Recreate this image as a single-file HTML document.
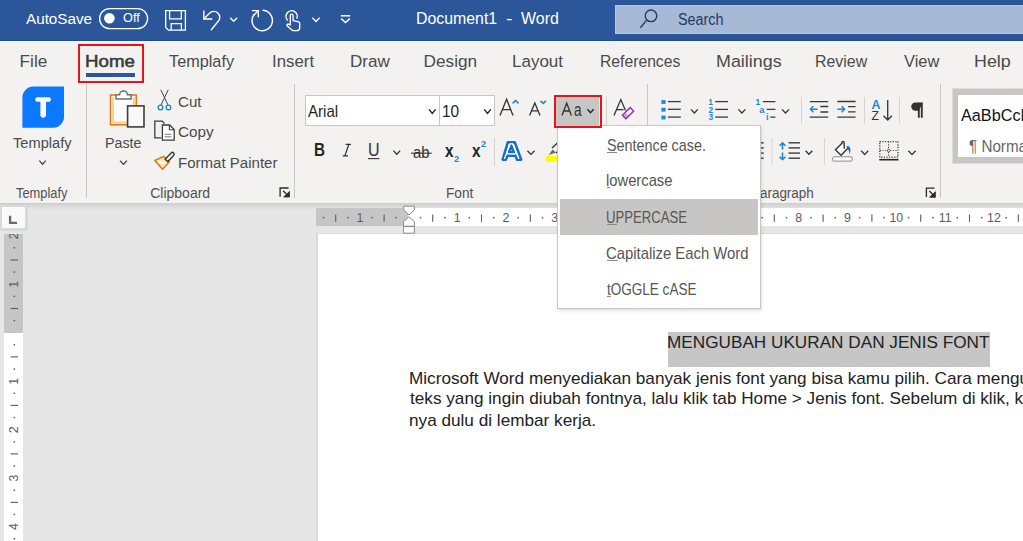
<!DOCTYPE html>
<html><head><meta charset="utf-8">
<style>
*{margin:0;padding:0;box-sizing:border-box}
html,body{width:1023px;height:541px;overflow:hidden;background:#e6e6e6;font-family:"Liberation Sans",sans-serif}
.a{position:absolute}
.t{position:absolute;white-space:nowrap;line-height:1;transform-origin:0 0}
svg{position:absolute;left:0;top:0;overflow:visible}
</style></head><body>
<div class="a" style="left:0;top:0;width:1023px;height:41px;background:#2b579a"></div>
<div class="a" style="left:0;top:39.5px;width:1023px;height:1.5px;background:#1f4d8e"></div>
<div class="a" style="left:0;top:41px;width:1023px;height:162px;background:#f3f2f1"></div>
<div class="a" style="left:0;top:203px;width:1023px;height:7px;background:linear-gradient(#cbcdcc,#d9dad9 45%,#e6e6e6)"></div>
<div class="a" style="left:615px;top:5px;width:420px;height:28.5px;background:#a7b9d4;border:1px solid #b6c6dd"></div>
<div class="a" style="left:316px;top:233px;width:710px;height:310px;background:#d9d9d9"></div>
<div class="a" style="left:318px;top:234px;width:705px;height:307px;background:#fff"></div>
<div class="a" style="left:667.5px;top:332px;width:322.5px;height:35px;background:#c6c6c6"></div>
<div class="a" style="left:316px;top:208px;width:707px;height:18px;background:#fff"></div>
<div class="a" style="left:316px;top:208px;width:92px;height:18px;background:#c6c6c6"></div>
<div class="a" style="left:4px;top:234px;width:19px;height:307px;background:#fff"></div>
<div class="a" style="left:4px;top:234px;width:19px;height:99px;background:#c6c6c6"></div>
<div class="a" style="left:0px;top:205px;width:28px;height:26px;background:#d9d9d9"></div>
<div class="a" style="left:2px;top:207px;width:23px;height:21px;background:#fafafa"></div>
<div class="a" style="left:305px;top:95px;width:135px;height:31px;background:#fff;border:1px solid #c8c6c4"></div>
<div class="a" style="left:439px;top:95px;width:56px;height:31px;background:#fff;border:1px solid #c8c6c4"></div>
<div class="a" style="left:556px;top:97px;width:43px;height:28px;background:#c8c6c4"></div>
<div class="a" style="left:86px;top:73px;width:49px;height:4px;background:#2b579a"></div>
<div class="a" style="left:952px;top:88px;width:80px;height:76px;background:#c8c6c4;border:1px solid #dcdcdc"></div>
<div class="a" style="left:958px;top:95px;width:80px;height:62px;background:#fff"></div>
<svg width="1023" height="541"><rect x="99.6" y="8.6" width="48" height="20" rx="10" fill="none" stroke="#fff" stroke-width="1.3"/>
<circle cx="109.4" cy="18.3" r="5.3" fill="#fff"/>
<path d="M165.7 10.7 H185.4 V30.2 H168.4 L165.7 27.5 Z" fill="none" stroke="#fff" stroke-width="1.3"/>
<path d="M169.6 10.7 V18.9 H181.3 V10.7" fill="none" stroke="#fff" stroke-width="1.3"/>
<path d="M171.2 30.2 V23.6 H181.4 V30.2" fill="none" stroke="#fff" stroke-width="1.3"/>
<path d="M203.8 10.5 V19.0 H212.3" fill="none" stroke="#fff" stroke-width="1.4"/>
<path d="M204.3 18.5 L209.5 13.3 A5.9 5.9 0 0 1 218.2 21.3 L211 30.2" fill="none" stroke="#fff" stroke-width="1.4"/>
<path d="M230.2 17.8 L233.7 21.3 L237.2 17.8" fill="none" stroke="#fff" stroke-width="1.3"/>
<path d="M262.5 10.3 A10.2 10.2 0 1 1 254 14.5" fill="none" stroke="#fff" stroke-width="1.4"/>
<path d="M251.8 10.6 H258.3 V17.2" fill="none" stroke="#fff" stroke-width="1.4"/>
<path d="M253.4 15.6 L258.2 10.8" fill="none" stroke="#fff" stroke-width="1.4"/>
<path d="M287.7 20.4 A5.6 5.6 0 1 1 296.7 18.8" fill="none" stroke="#fff" stroke-width="1.4"/>
<path d="M290.3 25 V15.6 A1.4 1.4 0 0 1 293.1 15.6 V20.6 L298 21.6 A2 2 0 0 1 299.7 23.6 V27.4 A3.2 3.2 0 0 1 296.5 30.6 H292.6 L287 25.8 A1.2 1.2 0 0 1 288.8 24.3 Z" fill="#2b579a" stroke="#fff" stroke-width="1.35" stroke-linejoin="round"/>
<path d="M312.4 17.8 L316.0 21.5 L319.6 17.8" fill="none" stroke="#fff" stroke-width="1.3"/>
<path d="M340.8 15.8 H350.2" stroke="#fff" stroke-width="1.5"/>
<path d="M341.2 18.6 L345.5 22.6 L349.8 18.6" fill="none" stroke="#fff" stroke-width="1.5"/>
<circle cx="651" cy="15.8" r="5.8" fill="none" stroke="#1f3b6e" stroke-width="1.4"/>
<path d="M646.9 19.9 L640.3 27.8" stroke="#1f3b6e" stroke-width="1.4"/>
<path d="M86.5 84 V198" stroke="#c8c6c4" stroke-width="1"/>
<path d="M294.5 84 V198" stroke="#c8c6c4" stroke-width="1"/>
<path d="M647.5 84 V198" stroke="#c8c6c4" stroke-width="1"/>
<path d="M940.5 84 V198" stroke="#c8c6c4" stroke-width="1"/>
<path d="M606.5 96 V125" stroke="#d6d4d2" stroke-width="1"/>
<path d="M494.5 138 V166" stroke="#d6d4d2" stroke-width="1"/>
<path d="M801.5 97 V124" stroke="#d6d4d2" stroke-width="1"/>
<path d="M864.5 97 V124" stroke="#d6d4d2" stroke-width="1"/>
<path d="M899.5 97 V124" stroke="#d6d4d2" stroke-width="1"/>
<path d="M772 138 V165" stroke="#d6d4d2" stroke-width="1"/>
<path d="M824.5 138 V165" stroke="#d6d4d2" stroke-width="1"/>
<path d="M33.5 86.6 H64 V116.7 A11 11 0 0 1 53 127.7 H22.4 V97.6 A11 11 0 0 1 33.5 86.6 Z" fill="#0a78ff"/>
<path d="M37.5 99.5 H48.7" stroke="#fff" stroke-width="4.6" stroke-linecap="round"/>
<path d="M40.4 99 H46 V116 L43.2 118.2 L40.4 116 Z" fill="#fff"/>
<path d="M39.3 160.6 L42.55 164.2 L45.8 160.6" fill="none" stroke="#444444" stroke-width="1.3"/>
<rect x="110.5" y="95" width="25.8" height="29.8" fill="#fbfbfb" stroke="#e07c1c" stroke-width="1.6"/>
<path d="M112.8 97.3 V122.6 H134 V97.3" fill="none" stroke="#f6d48e" stroke-width="2.4"/>
<path d="M116 99 V94.8 H119.6 A3.9 3.9 0 0 1 127.4 94.8 H131.1 V99 Z" fill="#fff" stroke="#707070" stroke-width="1.5"/>
<rect x="127.6" y="105.9" width="16.4" height="21" fill="#f8f8f8" stroke="#3c3c3c" stroke-width="1.6"/>
<path d="M120 160.6 L123.5 164.2 L127 160.6" fill="none" stroke="#444444" stroke-width="1.3"/>
<path d="M160.8 89.8 L168 105 M168.2 89.8 L161 105" stroke="#444" stroke-width="1"/>
<circle cx="160.5" cy="107.4" r="2.3" fill="#fff" stroke="#1e88d8" stroke-width="1.4"/>
<circle cx="168.4" cy="107.4" r="2.3" fill="#fff" stroke="#1e88d8" stroke-width="1.4"/>
<path d="M161.3 137.8 H154.8 V121.2 H162.2 L164.6 123.6" fill="none" stroke="#3c3c3c" stroke-width="1.3"/>
<path d="M162.4 125 H169.6 L174.2 129.6 V140.1 H162.4 Z" fill="#fff" stroke="#3c3c3c" stroke-width="1.3"/>
<path d="M169.4 125 V129.8 H174.2" fill="none" stroke="#3c3c3c" stroke-width="1.1"/>
<path d="M164.8 134.3 H171.4 M164.8 136.8 H171.4" stroke="#777" stroke-width="1"/>
<path d="M154.8 160.4 L163.5 156.4 L169.4 161.8 L162.6 169.2 Z" fill="#fde7b8" stroke="#e07c1c" stroke-width="1.6" stroke-linejoin="round"/>
<path d="M158 162 L166 163" stroke="#fff" stroke-width="1.4"/>
<path d="M165.2 159.2 L167.8 161.6 L173.6 155.4 A1.6 1.6 0 0 0 171.2 153 Z" fill="#fff" stroke="#3c3c3c" stroke-width="1.5"/>
<path d="M280.1 196.79999999999998 V188.0 H288.6" fill="none" stroke="#2a2a2a" stroke-width="1.3"/><path d="M283.1 190.8 L288.90000000000003 196.4" fill="none" stroke="#2a2a2a" stroke-width="1.3"/><path d="M289.5 191.4 V197.0 H283.70000000000005 Z" fill="#2a2a2a" stroke="#2a2a2a" stroke-width="0.8" stroke-linejoin="round"/>
<path d="M926.4 197.1 V188.2 H934.5" fill="none" stroke="#2a2a2a" stroke-width="1.3"/><path d="M929.4 191.0 L934.8 196.70000000000002" fill="none" stroke="#2a2a2a" stroke-width="1.3"/><path d="M935.4 191.70000000000002 V197.3 H929.6 Z" fill="#2a2a2a" stroke="#2a2a2a" stroke-width="0.8" stroke-linejoin="round"/>
<path d="M429 109.4 L432.3 113.4 L435.6 109.4" fill="none" stroke="#222" stroke-width="1.4"/>
<path d="M484.2 109.4 L487.5 113.4 L490.8 109.4" fill="none" stroke="#222" stroke-width="1.4"/>
<path d="M500 115.5 L506.6 99.2 L513 115.5 M502.6 109.6 H510.6" fill="none" stroke="#333" stroke-width="1.35"/>
<path d="M512.6 103.3 L515.6 100.6 L518.6 103.3" fill="none" stroke="#1e88d8" stroke-width="1.6"/>
<path d="M529.6 115.5 L534.8 103 L540 115.5 M531.6 110.8 H538" fill="none" stroke="#333" stroke-width="1.3"/>
<path d="M540.5 100.8 L543.2 103.4 L545.9 100.8" fill="none" stroke="#1e88d8" stroke-width="1.6"/>
<path d="M562 115.6 L566.7 103.2 L571.4 115.6 M563.8 111 H569.6" fill="none" stroke="#333" stroke-width="1.3"/>
<path d="M587.4 109.2 L590.5 112.6 L593.6 109.2" fill="none" stroke="#222" stroke-width="1.4"/>
<path d="M614 115.6 L620.8 99.6 L625.5 110.5 M616.6 109.6 H623.5" fill="none" stroke="#333" stroke-width="1.3"/>
<path d="M622.4 115.2 L630.2 107.6 L633.6 111.2 L625.8 118.6 Z" fill="#fff" stroke="#9b30b8" stroke-width="1.5"/>
<path d="M623.5 115.2 L625.8 117.4 L628 115.2 L625.8 113 Z" fill="#c99ad8"/>
<path d="M393.4 150.6 L396.79999999999995 154.3 L400.2 150.6" fill="none" stroke="#333" stroke-width="1.3"/>
<path d="M345.6 144.3 H351 M342.7 155.9 H348.1 M348.9 144.3 L344.8 155.9" fill="none" stroke="#333" stroke-width="1.25"/>
<path d="M368 158.6 H379.4" stroke="#333" stroke-width="1.1"/>
<path d="M411 153.2 H431.8" stroke="#333" stroke-width="1.1"/>
<path d="M507.8 142.4 H514.8 L521.2 159.6 H517 L515.5 155.6 H507.4 L505.9 159.6 H502.7 Z M509 152.2 H513.8 L511.4 145.4 Z" fill="#fff" stroke="#1a6fc4" stroke-width="2.6" stroke-linejoin="round"/>
<path d="M504.3 159 L510.4 143.6 H512.4 L519 159 M508 154 H515" fill="none" stroke="#fff" stroke-width="1.1"/>
<path d="M527.4 150.8 L531.0 154.4 L534.6 150.8" fill="none" stroke="#333" stroke-width="1.3"/>
<rect x="546" y="156" width="12" height="5.7" fill="#ffff00"/>
<path d="M548.8 155 L552.5 149.5 L556 152.5 Z" fill="#666"/>
<path d="M552 148 L558 142.5 M556 153 L560 149" stroke="#333" stroke-width="1.3"/>
<rect x="661.4" y="100.10000000000001" width="4.2" height="3.8" fill="#1e88d8"/>
<path d="M667.9 101.60000000000001 H680.8" stroke="#3a3a3a" stroke-width="1.3"/>
<rect x="661.4" y="107.8" width="4.2" height="3.8" fill="#1e88d8"/>
<path d="M667.9 109.3 H680.8" stroke="#3a3a3a" stroke-width="1.3"/>
<rect x="661.4" y="115.60000000000001" width="4.2" height="3.8" fill="#1e88d8"/>
<path d="M667.9 117.10000000000001 H680.8" stroke="#3a3a3a" stroke-width="1.3"/>
<path d="M691 109.4 L694.4 113 L697.8 109.4" fill="none" stroke="#333" stroke-width="1.3"/>
<path d="M715.2 101.6 H728.1" stroke="#3a3a3a" stroke-width="1.3"/>
<path d="M715.2 109.4 H728.1" stroke="#3a3a3a" stroke-width="1.3"/>
<path d="M715.2 117.1 H728.1" stroke="#3a3a3a" stroke-width="1.3"/>
<text x="710.6" y="104.8" font-size="8.4" font-weight="bold" fill="#1e88d8" text-anchor="middle">1</text>
<text x="710.8" y="112.9" font-size="8.4" font-weight="bold" fill="#1e88d8" text-anchor="middle">2</text>
<text x="710.8" y="120.4" font-size="8.4" font-weight="bold" fill="#1e88d8" text-anchor="middle">3</text>
<path d="M738.4 109.4 L741.9 113 L745.4 109.4" fill="none" stroke="#333" stroke-width="1.3"/>
<text x="757.9" y="104.8" font-size="8.4" font-weight="bold" fill="#1e88d8" text-anchor="middle">1</text>
<text x="761.8" y="112.8" font-size="9.4" font-weight="bold" fill="#1e88d8" text-anchor="middle">a</text>
<text x="767.2" y="120.4" font-size="9.2" font-weight="bold" fill="#1e88d8" text-anchor="middle">i</text>
<path d="M762.9 101.6 H775.4 M766.8 109.3 H775.4 M770.2 117.1 H775.4" stroke="#3a3a3a" stroke-width="1.3"/>
<path d="M782 109.4 L785.5 113 L789 109.4" fill="none" stroke="#333" stroke-width="1.3"/>
<path d="M809.8 101.6 H828.2 M820.4 106.5 H828.2 M820.4 112 H828.2 M809.8 117.1 H828.2" stroke="#3a3a3a" stroke-width="1.3"/>
<path d="M810.4 109.2 H817.6 M813.4 106.2 L810.4 109.2 L813.4 112.2" fill="none" stroke="#1e88d8" stroke-width="1.5"/>
<path d="M837.3 101.5 H855.6 M848.1 106.7 H855.6 M848.1 111.9 H855.6 M837.3 117.2 H855.6" stroke="#3a3a3a" stroke-width="1.3"/>
<path d="M837.3 109.2 H844.6 M841.6 106.2 L844.6 109.2 L841.6 112.2" fill="none" stroke="#1e88d8" stroke-width="1.5"/>
<text x="876" y="108.8" font-size="12.4" font-weight="bold" fill="#1e88d8" text-anchor="middle">A</text>
<text x="875.2" y="120.2" font-size="12.2" fill="#333" text-anchor="middle">Z</text>
<path d="M887.7 100.1 V119.6 M883.5 115.8 L887.7 120 L891.9 115.8" fill="none" stroke="#333" stroke-width="1.3"/>
<path d="M918.8 102.8 V117.8 M921.8 102.8 V117.8" stroke="#333" stroke-width="1.9"/>
<path d="M922.9 102.4 H915.4 A4.2 4.2 0 0 0 915.4 110.8 H918.8 Z" fill="#333"/>
<path d="M758 142.8 H763.8" stroke="#3a3a3a" stroke-width="1.3"/>
<path d="M758 147.9 H763.8" stroke="#3a3a3a" stroke-width="1.3"/>
<path d="M758 153.1 H763.8" stroke="#3a3a3a" stroke-width="1.3"/>
<path d="M758 158.2 H763.8" stroke="#3a3a3a" stroke-width="1.3"/>
<path d="M788.5 142.8 H800" stroke="#3a3a3a" stroke-width="1.4"/>
<path d="M788.5 147.9 H800" stroke="#3a3a3a" stroke-width="1.4"/>
<path d="M788.5 153.1 H800" stroke="#3a3a3a" stroke-width="1.4"/>
<path d="M788.5 158.2 H800" stroke="#3a3a3a" stroke-width="1.4"/>
<path d="M782.5 143 V149.5 M779.6 145.8 L782.5 142.9 L785.4 145.8 M782.5 152.6 V160 M779.6 156.8 L782.5 159.7 L785.4 156.8" fill="none" stroke="#1e88d8" stroke-width="1.6"/>
<path d="M805.6 150.8 L808.95 154.3 L812.3 150.8" fill="none" stroke="#333" stroke-width="1.3"/>
<path d="M842.3 142.9 L835.4 149.8 L841.1 155.3 L847.8 148.2" fill="#fff" stroke="#333" stroke-width="1.4" stroke-linejoin="round"/>
<path d="M841.8 143.5 V142.6 A1.2 1.2 0 0 1 844.2 142.6 V148.3" fill="none" stroke="#333" stroke-width="1.4" stroke-linecap="round"/>
<path d="M846.2 146.8 Q847.4 145.3 849.2 146.4 Q851.4 148.2 849.6 154.2 Q849.2 150 847.4 148.4 Z" fill="#1a6fc4"/>
<rect x="832.7" y="156.8" width="19.4" height="4.3" rx="1" fill="#fff" stroke="#8a8a8a" stroke-width="1"/>
<path d="M861.2 150.8 L864.7 154.6 L868.2 150.8" fill="none" stroke="#333" stroke-width="1.3"/>
<rect x="879.8" y="141.6" width="18.2" height="15.6" fill="none" stroke="#3a3a3a" stroke-width="1.3" stroke-dasharray="1.2 1.4"/>
<path d="M888.6 141.6 V157.2 M879.8 150.5 H898" fill="none" stroke="#555" stroke-width="1.2" stroke-dasharray="1.2 1.4"/>
<circle cx="888.6" cy="150.5" r="1.3" fill="#fff" stroke="#444" stroke-width="0.9"/>
<path d="M879.3 159.7 H898.5" stroke="#222" stroke-width="1.6"/>
<path d="M908.4 150.8 L912.0 154.6 L915.6 150.8" fill="none" stroke="#333" stroke-width="1.3"/></svg>
<div class="t" style="left:25.77px;top:11.00px;font-size:15.4px;color:#fff;transform:scaleX(0.9899);">AutoSave</div>
<div class="t" style="left:123.40px;top:12.00px;font-size:12.2px;color:#fff;transform:scaleX(1.0440);">Off</div>
<div class="t" style="left:416.30px;top:10.00px;font-size:17px;color:#fff;transform:scaleX(0.9338);">Document1</div>
<div class="t" style="left:506.14px;top:10.00px;font-size:17px;color:#fff;transform:scaleX(1.1324);">-</div>
<div class="t" style="left:520.63px;top:10.00px;font-size:17px;color:#fff;transform:scaleX(0.9380);">Word</div>
<div class="t" style="left:677.75px;top:12.00px;font-size:16px;color:#1e3a6b;transform:scaleX(0.8972);">Search</div>
<div class="t" style="left:19.59px;top:53.00px;font-size:17.2px;color:#4a4a4a;">File</div>
<div class="t" style="left:169.13px;top:53.00px;font-size:17.2px;color:#4a4a4a;transform:scaleX(0.9458);">Templafy</div>
<div class="t" style="left:271.94px;top:53.00px;font-size:17.2px;color:#4a4a4a;transform:scaleX(0.9805);">Insert</div>
<div class="t" style="left:349.60px;top:53.00px;font-size:17.2px;color:#4a4a4a;transform:scaleX(0.9931);">Draw</div>
<div class="t" style="left:423.59px;top:53.00px;font-size:17.2px;color:#4a4a4a;">Design</div>
<div class="t" style="left:512.11px;top:53.00px;font-size:17.2px;color:#4a4a4a;transform:scaleX(0.9879);">Layout</div>
<div class="t" style="left:599.71px;top:53.00px;font-size:17.2px;color:#4a4a4a;transform:scaleX(0.9136);">References</div>
<div class="t" style="left:716.03px;top:53.00px;font-size:17.2px;color:#4a4a4a;transform:scaleX(1.0400);">Mailings</div>
<div class="t" style="left:815.19px;top:53.00px;font-size:17.2px;color:#4a4a4a;transform:scaleX(0.9268);">Review</div>
<div class="t" style="left:903.93px;top:53.00px;font-size:17.2px;color:#4a4a4a;transform:scaleX(0.9531);">View</div>
<div class="t" style="left:973.54px;top:53.00px;font-size:17.2px;color:#4a4a4a;transform:scaleX(1.0379);">Help</div>
<div class="t" style="left:84.97px;top:53.00px;font-size:17.2px;color:#3a3a3a;transform:scaleX(1.0868);-webkit-text-stroke:0.55px #3a3a3a;">Home</div>
<div class="t" style="left:12.67px;top:135.00px;font-size:15.3px;color:#4a4a4a;transform:scaleX(0.9561);">Templafy</div>
<div class="t" style="left:105.33px;top:135.00px;font-size:15.3px;color:#4a4a4a;transform:scaleX(0.9304);">Paste</div>
<div class="t" style="left:178.03px;top:94.00px;font-size:15.3px;color:#4a4a4a;transform:scaleX(0.9860);">Cut</div>
<div class="t" style="left:178.03px;top:124.00px;font-size:15.3px;color:#4a4a4a;transform:scaleX(0.9968);">Copy</div>
<div class="t" style="left:178.07px;top:155.00px;font-size:15.3px;color:#4a4a4a;transform:scaleX(0.9832);">Format Painter</div>
<div class="t" style="left:15.71px;top:186.00px;font-size:14.0px;color:#505050;transform:scaleX(0.9191);">Templafy</div>
<div class="t" style="left:150.19px;top:186.00px;font-size:14.0px;color:#505050;">Clipboard</div>
<div class="t" style="left:445.78px;top:186.00px;font-size:14.0px;color:#505050;transform:scaleX(0.9752);">Font</div>
<div class="t" style="left:751.01px;top:186.00px;font-size:14.0px;color:#505050;transform:scaleX(0.9600);">Paragraph</div>
<div class="t" style="left:308.27px;top:103.00px;font-size:16.4px;color:#262626;transform:scaleX(0.9217);">Arial</div>
<div class="t" style="left:442.42px;top:103.00px;font-size:16.4px;color:#262626;transform:scaleX(0.9418);">10</div>
<div class="t" style="left:574.22px;top:102.00px;font-size:17.5px;color:#333;transform:scaleX(0.7787);">a</div>
<div class="t" style="left:313.78px;top:141.00px;font-size:18.6px;color:#262626;font-weight:bold;transform:scaleX(0.8199);">B</div>
<div class="t" style="left:367.86px;top:141.00px;font-size:18px;color:#333;transform:scaleX(0.8903);">U</div>
<div class="t" style="left:412.77px;top:144.00px;font-size:17.4px;color:#333;transform:scaleX(0.8555);">ab</div>
<div class="t" style="left:444.50px;top:143.00px;font-size:17.5px;color:#262626;font-weight:bold;transform:scaleX(0.8751);">x</div>
<div class="t" style="left:453.78px;top:155.00px;font-size:8.4px;color:#1e88d8;font-weight:bold;transform:scaleX(1.1127);">2</div>
<div class="t" style="left:472.20px;top:143.00px;font-size:17.5px;color:#262626;font-weight:bold;transform:scaleX(0.8751);">x</div>
<div class="t" style="left:481.18px;top:140.00px;font-size:8.4px;color:#1e88d8;font-weight:bold;transform:scaleX(1.0880);">2</div>
<div class="t" style="left:960.77px;top:107.00px;font-size:17.4px;color:#111;transform:scaleX(0.9330);">AaBbCcDc</div>
<div class="t" style="left:968.61px;top:139.00px;font-size:15.7px;color:#666;transform:scaleX(0.9700);">¶ Normal</div>
<div class="t" style="left:666.89px;top:334.00px;font-size:17px;color:#222;transform:scaleX(1.0102);">MENGUBAH UKURAN DAN JENIS FONT</div>
<div class="t" style="left:409.21px;top:370.00px;font-size:17px;color:#222;transform:scaleX(1.01);">Microsoft Word menyediakan banyak jenis font yang bisa kamu pilih. Cara mengubahnya adalah</div>
<div class="t" style="left:410.01px;top:390.00px;font-size:17px;color:#222;transform:scaleX(1.01);">teks yang ingin diubah fontnya, lalu klik tab Home &gt; Jenis font. Sebelum di klik, kamu juga</div>
<div class="t" style="left:409.21px;top:412.00px;font-size:17px;color:#222;transform:scaleX(1.01);">nya dulu di lembar kerja.</div>
<svg width="1023" height="541"><rect x="322.85" y="216.9" width="1.5" height="1.5" fill="#5c5c5c"/>
<path d="M335.7 214.6 V221.8" stroke="#5c5c5c" stroke-width="1.1"/>
<rect x="347.05" y="216.9" width="1.5" height="1.5" fill="#5c5c5c"/>
<text x="359.9" y="221.9" font-size="12.4" fill="#5c5c5c" text-anchor="middle">1</text>
<rect x="371.25" y="216.9" width="1.5" height="1.5" fill="#5c5c5c"/>
<path d="M384.1 214.6 V221.8" stroke="#5c5c5c" stroke-width="1.1"/>
<rect x="395.45" y="216.9" width="1.5" height="1.5" fill="#5c5c5c"/>
<rect x="419.75" y="216.9" width="1.5" height="1.5" fill="#5c5c5c"/>
<path d="M432.7 214.6 V221.8" stroke="#5c5c5c" stroke-width="1.1"/>
<rect x="444.15" y="216.9" width="1.5" height="1.5" fill="#5c5c5c"/>
<text x="457.1" y="221.9" font-size="12.4" fill="#5c5c5c" text-anchor="middle">1</text>
<rect x="468.55" y="216.9" width="1.5" height="1.5" fill="#5c5c5c"/>
<path d="M481.5 214.6 V221.8" stroke="#5c5c5c" stroke-width="1.1"/>
<rect x="492.95" y="216.9" width="1.5" height="1.5" fill="#5c5c5c"/>
<text x="505.9" y="221.9" font-size="12.4" fill="#5c5c5c" text-anchor="middle">2</text>
<rect x="517.35" y="216.9" width="1.5" height="1.5" fill="#5c5c5c"/>
<path d="M530.3 214.6 V221.8" stroke="#5c5c5c" stroke-width="1.1"/>
<rect x="541.75" y="216.9" width="1.5" height="1.5" fill="#5c5c5c"/>
<text x="554.7" y="221.9" font-size="12.4" fill="#5c5c5c" text-anchor="middle">3</text>
<rect x="566.15" y="216.9" width="1.5" height="1.5" fill="#5c5c5c"/>
<path d="M579.1 214.6 V221.8" stroke="#5c5c5c" stroke-width="1.1"/>
<rect x="590.55" y="216.9" width="1.5" height="1.5" fill="#5c5c5c"/>
<text x="603.5" y="221.9" font-size="12.4" fill="#5c5c5c" text-anchor="middle">4</text>
<rect x="614.95" y="216.9" width="1.5" height="1.5" fill="#5c5c5c"/>
<path d="M627.9 214.6 V221.8" stroke="#5c5c5c" stroke-width="1.1"/>
<rect x="639.35" y="216.9" width="1.5" height="1.5" fill="#5c5c5c"/>
<text x="652.3" y="221.9" font-size="12.4" fill="#5c5c5c" text-anchor="middle">5</text>
<rect x="663.75" y="216.9" width="1.5" height="1.5" fill="#5c5c5c"/>
<path d="M676.7 214.6 V221.8" stroke="#5c5c5c" stroke-width="1.1"/>
<rect x="688.15" y="216.9" width="1.5" height="1.5" fill="#5c5c5c"/>
<text x="701.1" y="221.9" font-size="12.4" fill="#5c5c5c" text-anchor="middle">6</text>
<rect x="712.55" y="216.9" width="1.5" height="1.5" fill="#5c5c5c"/>
<path d="M725.5 214.6 V221.8" stroke="#5c5c5c" stroke-width="1.1"/>
<rect x="736.95" y="216.9" width="1.5" height="1.5" fill="#5c5c5c"/>
<text x="749.9" y="221.9" font-size="12.4" fill="#5c5c5c" text-anchor="middle">7</text>
<rect x="761.35" y="216.9" width="1.5" height="1.5" fill="#5c5c5c"/>
<path d="M774.3 214.6 V221.8" stroke="#5c5c5c" stroke-width="1.1"/>
<rect x="785.75" y="216.9" width="1.5" height="1.5" fill="#5c5c5c"/>
<text x="798.7" y="221.9" font-size="12.4" fill="#5c5c5c" text-anchor="middle">8</text>
<rect x="810.15" y="216.9" width="1.5" height="1.5" fill="#5c5c5c"/>
<path d="M823.1 214.6 V221.8" stroke="#5c5c5c" stroke-width="1.1"/>
<rect x="834.55" y="216.9" width="1.5" height="1.5" fill="#5c5c5c"/>
<text x="847.5" y="221.9" font-size="12.4" fill="#5c5c5c" text-anchor="middle">9</text>
<rect x="858.95" y="216.9" width="1.5" height="1.5" fill="#5c5c5c"/>
<path d="M871.9 214.6 V221.8" stroke="#5c5c5c" stroke-width="1.1"/>
<rect x="883.35" y="216.9" width="1.5" height="1.5" fill="#5c5c5c"/>
<text x="896.3" y="221.9" font-size="12.4" fill="#5c5c5c" text-anchor="middle">10</text>
<rect x="907.75" y="216.9" width="1.5" height="1.5" fill="#5c5c5c"/>
<path d="M920.7 214.6 V221.8" stroke="#5c5c5c" stroke-width="1.1"/>
<rect x="932.15" y="216.9" width="1.5" height="1.5" fill="#5c5c5c"/>
<text x="945.1" y="221.9" font-size="12.4" fill="#5c5c5c" text-anchor="middle">11</text>
<rect x="956.55" y="216.9" width="1.5" height="1.5" fill="#5c5c5c"/>
<path d="M969.5 214.6 V221.8" stroke="#5c5c5c" stroke-width="1.1"/>
<rect x="980.95" y="216.9" width="1.5" height="1.5" fill="#5c5c5c"/>
<text x="993.9" y="221.9" font-size="12.4" fill="#5c5c5c" text-anchor="middle">12</text>
<rect x="1005.35" y="216.9" width="1.5" height="1.5" fill="#5c5c5c"/>
<path d="M1018.3 214.6 V221.8" stroke="#5c5c5c" stroke-width="1.1"/>
<path d="M403.6 206.2 H414.4 V209.8 L409 215 L403.6 209.8 Z" fill="#fff" stroke="#8a8a8a" stroke-width="1"/>
<path d="M403.6 226.2 V221.6 L409 216.8 L414.4 221.6 V226.2 Z" fill="#fff" stroke="#8a8a8a" stroke-width="1"/>
<rect x="403.6" y="226.6" width="10.8" height="6.6" fill="#fff" stroke="#8a8a8a" stroke-width="1"/>
<path d="M10.1 215.8 V222.9 H17" fill="none" stroke="#6a6a6a" stroke-width="2.3"/></svg>
<div class="a" style="left:0;top:234px;width:30px;height:307px;overflow:hidden"><svg width="30" height="541" style="top:-234px"><text x="0" y="0" font-size="12.4" fill="#5c5c5c" text-anchor="middle" transform="translate(17.9 235.7) rotate(-90)">2</text>
<rect x="13.6" y="247.11" width="1.5" height="1.5" fill="#5c5c5c"/>
<path d="M10.6 260.0 H18" stroke="#5c5c5c" stroke-width="1.1"/>
<rect x="13.6" y="271.35" width="1.5" height="1.5" fill="#5c5c5c"/>
<text x="0" y="0" font-size="12.4" fill="#5c5c5c" text-anchor="middle" transform="translate(17.9 284.2) rotate(-90)">1</text>
<rect x="13.6" y="295.59" width="1.5" height="1.5" fill="#5c5c5c"/>
<path d="M10.6 308.5 H18" stroke="#5c5c5c" stroke-width="1.1"/>
<rect x="13.6" y="319.83" width="1.5" height="1.5" fill="#5c5c5c"/>
<rect x="13.6" y="344.07" width="1.5" height="1.5" fill="#5c5c5c"/>
<path d="M10.6 356.9 H18" stroke="#5c5c5c" stroke-width="1.1"/>
<rect x="13.6" y="368.31" width="1.5" height="1.5" fill="#5c5c5c"/>
<text x="0" y="0" font-size="12.4" fill="#5c5c5c" text-anchor="middle" transform="translate(17.9 381.2) rotate(-90)">1</text>
<rect x="13.6" y="392.55" width="1.5" height="1.5" fill="#5c5c5c"/>
<path d="M10.6 405.4 H18" stroke="#5c5c5c" stroke-width="1.1"/>
<rect x="13.6" y="416.79" width="1.5" height="1.5" fill="#5c5c5c"/>
<text x="0" y="0" font-size="12.4" fill="#5c5c5c" text-anchor="middle" transform="translate(17.9 429.7) rotate(-90)">2</text>
<rect x="13.6" y="441.03" width="1.5" height="1.5" fill="#5c5c5c"/>
<path d="M10.6 453.9 H18" stroke="#5c5c5c" stroke-width="1.1"/>
<rect x="13.6" y="465.27" width="1.5" height="1.5" fill="#5c5c5c"/>
<text x="0" y="0" font-size="12.4" fill="#5c5c5c" text-anchor="middle" transform="translate(17.9 478.1) rotate(-90)">3</text>
<rect x="13.6" y="489.51" width="1.5" height="1.5" fill="#5c5c5c"/>
<path d="M10.6 502.4 H18" stroke="#5c5c5c" stroke-width="1.1"/>
<rect x="13.6" y="513.75" width="1.5" height="1.5" fill="#5c5c5c"/>
<text x="0" y="0" font-size="12.4" fill="#5c5c5c" text-anchor="middle" transform="translate(17.9 526.6) rotate(-90)">4</text>
<rect x="13.6" y="537.99" width="1.5" height="1.5" fill="#5c5c5c"/></svg></div>
<div class="a" style="left:557px;top:125px;width:204px;height:184px;background:#fff;border:1px solid #c8c6c4;box-shadow:1px 2px 3px rgba(0,0,0,0.12)"></div>
<div class="a" style="left:560px;top:198.6px;width:198.4px;height:36px;background:#c8c6c4"></div>
<div class="t" style="left:606.55px;top:137.00px;font-size:16.4px;color:#555;transform:scaleX(0.8754);">Sentence case.</div>
<div class="a" style="left:607px;top:151.6px;width:9.6px;height:1px;background:#8a8a8a"></div>
<div class="t" style="left:606.21px;top:172.00px;font-size:16.4px;color:#555;transform:scaleX(0.9000);">lowercase</div>
<div class="a" style="left:607px;top:187.3px;width:3.3px;height:1px;background:#8a8a8a"></div>
<div class="t" style="left:606.18px;top:209.00px;font-size:16.4px;color:#555;transform:scaleX(0.8025);">UPPERCASE</div>
<div class="a" style="left:607px;top:224.3px;width:9.5px;height:1px;background:#8a8a8a"></div>
<div class="t" style="left:606.45px;top:245.00px;font-size:16.4px;color:#555;transform:scaleX(0.9056);">Capitalize Each Word</div>
<div class="a" style="left:607px;top:259.6px;width:10.7px;height:1px;background:#8a8a8a"></div>
<div class="t" style="left:607.00px;top:281.00px;font-size:16.4px;color:#555;transform:scaleX(0.8251);">tOGGLE cASE</div>
<div class="a" style="left:607px;top:296.1px;width:3.8px;height:1px;background:#8a8a8a"></div>
<div class="a" style="left:554px;top:94.6px;width:47.6px;height:33px;border:2.6px solid #e3141c"></div>
<div class="a" style="left:78px;top:44.3px;width:66px;height:38.7px;border:2.2px solid #e3141c"></div>
</body></html>
